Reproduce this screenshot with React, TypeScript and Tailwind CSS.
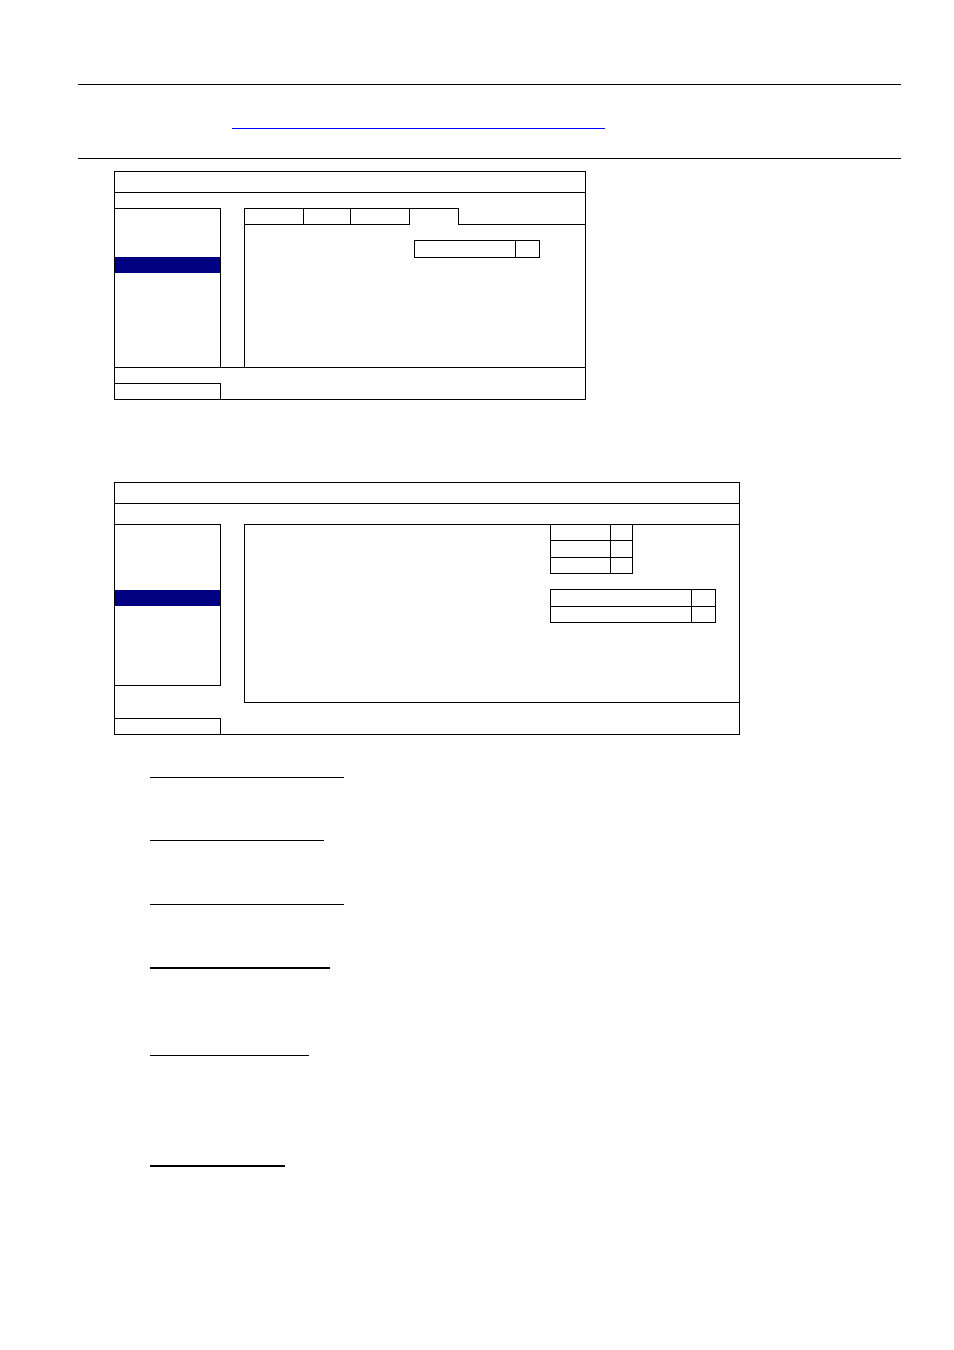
import React from 'react';

function Rule({ className }: { className: string }) {
  return <div className={`bg-black ${className}`} />;
}

function MenuScreenA() {
  return (
    <div className="mt-[12px] ml-[114px] w-[472px] border border-black">
      {/* title bar */}
      <div className="h-[21px] border-b border-black" />

      {/* body */}
      <div className="flex h-[175px] border-b border-black">
        <div className="w-[106px]">
          <div className="mt-[15px] h-[159px] border-t border-r border-black">
            <div className="mt-[48px] h-[16px] bg-[#000080]" />
          </div>
        </div>
        <div className="w-[23px]" />
        <div className="flex flex-1 flex-col">
          {/* tabs */}
          <div className="mt-[15px] flex h-[17px]">
            <div className="w-[60px] border border-black" />
            <div className="w-[47px] border-y border-r border-black" />
            <div className="w-[59px] border-y border-r border-black" />
            <div className="w-[49px] border-t border-r border-black" />
            <div className="flex-1 border-b border-black" />
          </div>
          <div className="flex h-[142px] flex-col border-l border-black">
            <div className="ml-[169px] mt-[15px] flex h-[18px] w-[126px] border border-black">
              <div className="w-[101px] border-r border-black" />
            </div>
          </div>
        </div>
      </div>

      {/* footer */}
      <div className="h-[31px] pt-[15px]">
        <div className="h-[16px] w-[106px] border-t border-r border-black" />
      </div>
    </div>
  );
}

function MenuScreenB() {
  return (
    <div className="mt-[82px] ml-[114px] w-[626px] border border-black">
      <div className="h-[21px] border-b border-black" />

      <div className="flex h-[230px]">
        <div className="w-[106px]">
          <div className="mt-[20px] h-[162px] border-t border-r border-b border-black">
            <div className="mt-[65px] h-[16px] bg-[#000080]" />
          </div>
          <div className="mt-[32px] h-[16px] border-t border-r border-black" />
        </div>
        <div className="w-[23px]" />
        <div className="mt-[20px] h-[179px] flex-1 border-t border-l border-b border-black">
          {/* first list */}
          <div className="ml-[305px] w-[83px] border-x border-black">
            <div className="flex h-[16px] border-b border-black">
              <div className="w-[60px] border-r border-black" />
            </div>
            <div className="flex h-[17px] border-b border-black">
              <div className="w-[60px] border-r border-black" />
            </div>
            <div className="flex h-[16px] border-b border-black">
              <div className="w-[60px] border-r border-black" />
            </div>
          </div>
          {/* second list */}
          <div className="ml-[305px] mt-[15px] w-[166px] border-t border-x border-black">
            <div className="flex h-[17px] border-b border-black">
              <div className="w-[141px] border-r border-black" />
            </div>
            <div className="flex h-[16px] border-b border-black">
              <div className="w-[141px] border-r border-black" />
            </div>
          </div>
        </div>
      </div>
    </div>
  );
}

export default function App() {
  return (
    <div className="h-[1350px] w-[954px] overflow-hidden bg-white font-['Liberation_Sans',Arial,sans-serif]">
      {/* page header */}
      <Rule className="mt-[84px] ml-[78px] h-px w-[823px]" />
      <div className="mt-[43px] ml-[232px] h-px w-[373px] bg-[#0000ff]" />
      <Rule className="mt-[29px] ml-[78px] h-px w-[823px]" />

      <MenuScreenA />
      <MenuScreenB />

      {/* section headings */}
      <Rule className="mt-[42px] ml-[150px] h-px w-[194px]" />
      <Rule className="mt-[62px] ml-[150px] h-px w-[174px]" />
      <Rule className="mt-[63px] ml-[150px] h-px w-[194px]" />
      <Rule className="mt-[62px] ml-[150px] h-[2px] w-[180px]" />
      <Rule className="mt-[86px] ml-[150px] h-px w-[159px]" />
      <Rule className="mt-[109px] ml-[150px] h-[2px] w-[135px]" />
    </div>
  );
}
